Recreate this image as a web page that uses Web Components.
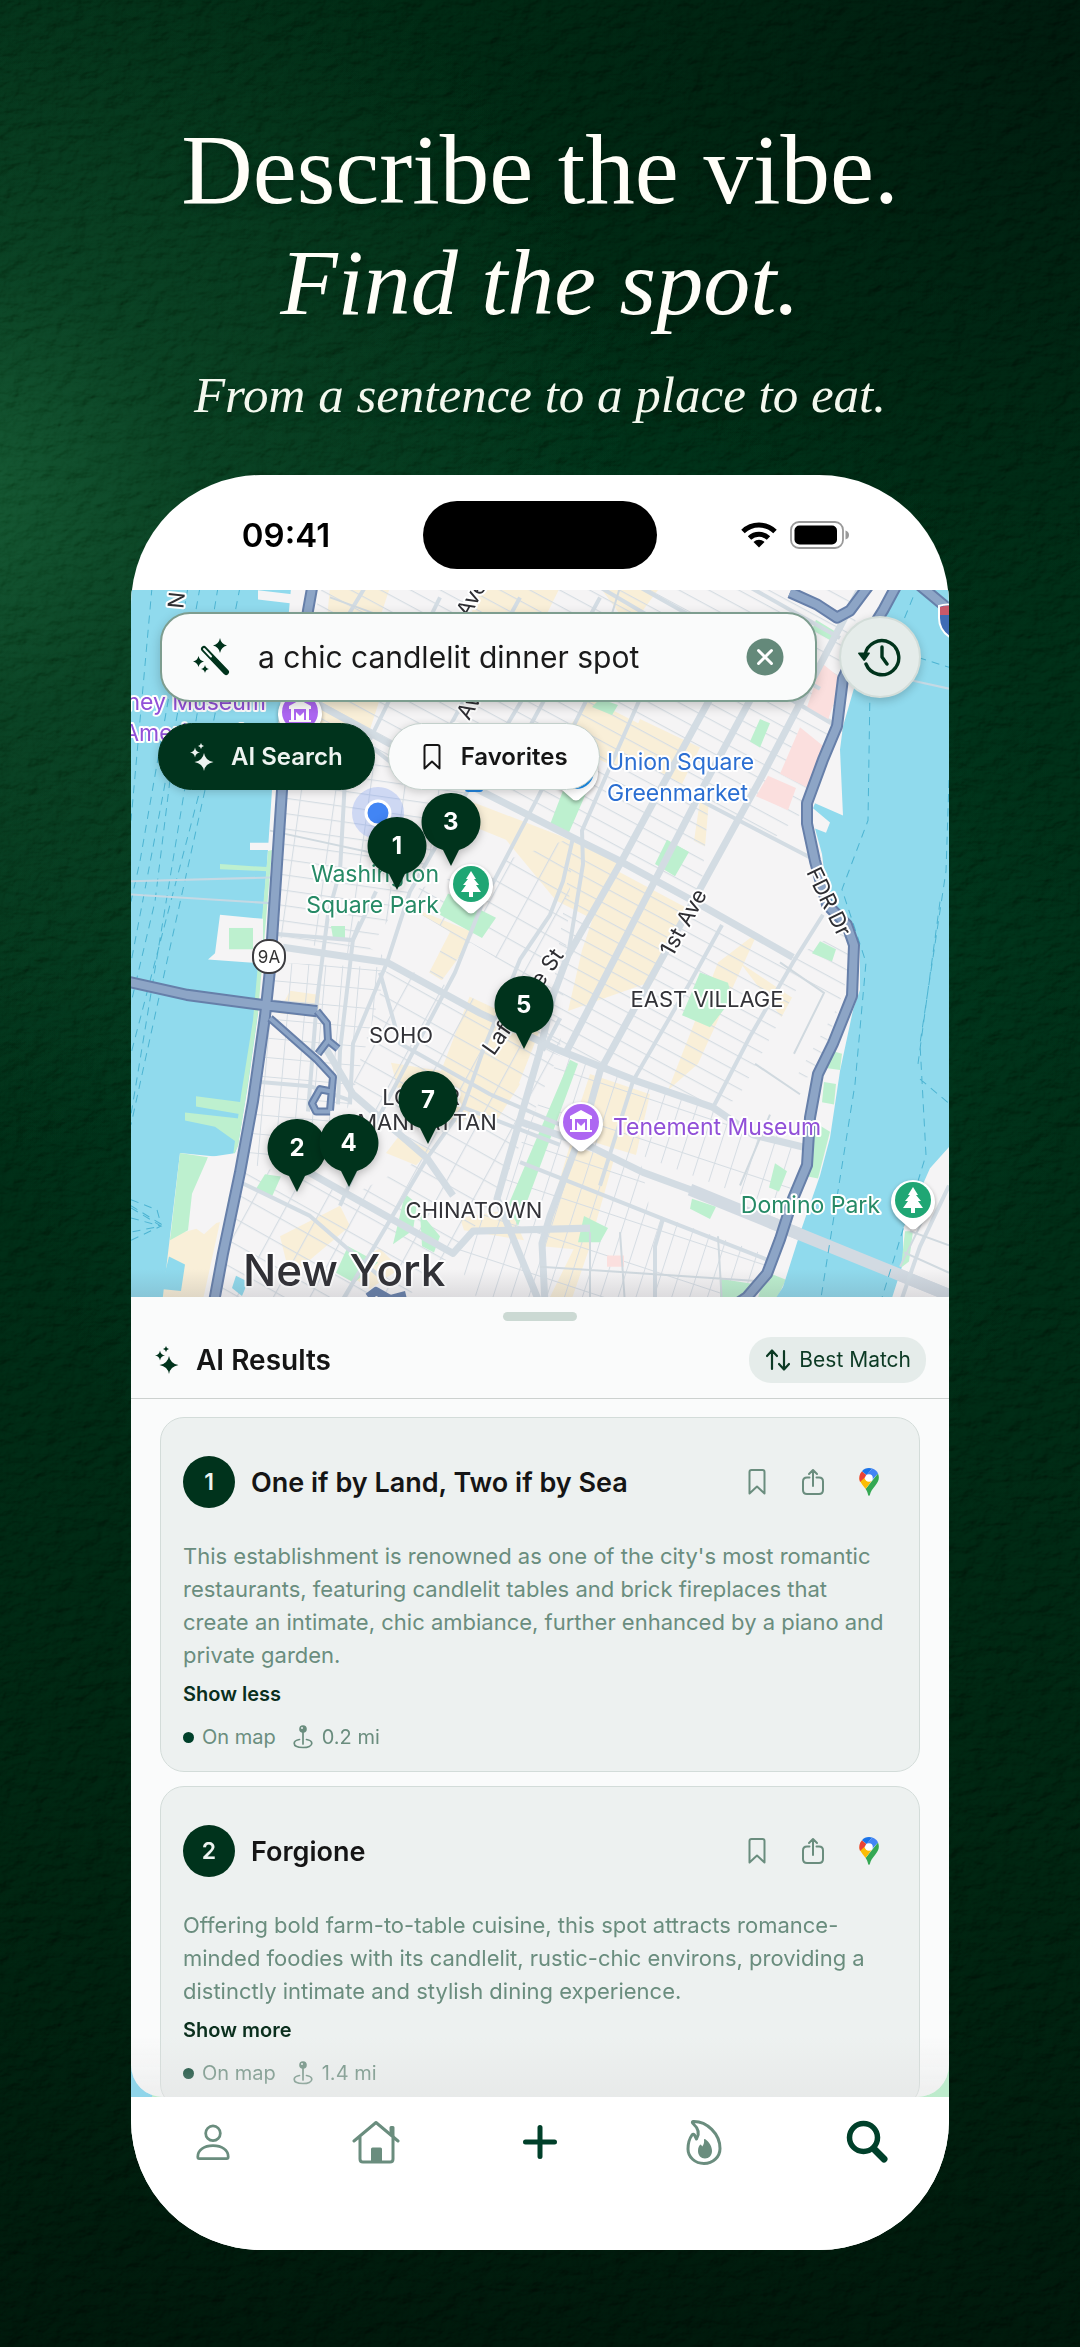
<!DOCTYPE html>
<html lang="en">
<head>
<meta charset="utf-8">
<meta name="viewport" content="width=device-width, initial-scale=1">
<title>Describe the vibe. Find the spot.</title>
<style>
  html, body {
    margin: 0;
    height: 100%;
    background: #00200e;
  }
  body {
    font-family: Inter, "Liberation Sans", sans-serif;
    color: #151515;
  }
</style>
</head>
<body>

<promo-stage>
  <span slot="title">Describe the vibe.</span>
  <em slot="accent">Find the spot.</em>
  <span slot="tagline">From a sentence to a place to eat.</span>

  <phone-frame>
    <status-bar time="09:41"></status-bar>
    <city-map>
      <map-pin style="left: 20.3%; top: 85.1%">2</map-pin>
      <map-pin style="left: 26.6%; top: 84.4%">4</map-pin>
      <map-pin style="left: 36.3%; top: 78.3%">7</map-pin>
      <map-pin style="left: 48%; top: 64.9%">5</map-pin>
      <map-pin style="left: 39.1%; top: 39%">3</map-pin>
      <map-pin style="left: 32.5%; top: 42.5%">1</map-pin>
      <search-panel slot="controls" query="a chic candlelit dinner spot"></search-panel>
    </city-map>
    <result-sheet>
      <result-card rank="1" name="One if by Land, Two if by Sea" toggle="Show less" distance="0.2 mi">This establishment is renowned as one of the city's most romantic restaurants, featuring candlelit tables and brick fireplaces that create an intimate, chic ambiance, further enhanced by a piano and private garden.</result-card>
      <result-card rank="2" name="Forgione" toggle="Show more" distance="1.4 mi">Offering bold farm-to-table cuisine, this spot attracts romance-minded foodies with its candlelit, rustic-chic environs, providing a distinctly intimate and stylish dining experience.</result-card>
    </result-sheet>
    <tab-bar></tab-bar>
  </phone-frame>
</promo-stage>

<script>
// Small base class: clones the markup of the element into an open shadow root
class BaseElement extends HTMLElement {
  constructor() {
    super();
    const template = document.createElement("template");
    template.innerHTML = this.constructor.markup;
    this.attachShadow({ mode: "open" });
    this.shadowRoot.appendChild(template.content.cloneNode(true));
  }
  fill(selector, attribute) {
    this.shadowRoot.querySelector(selector).textContent = this.getAttribute(attribute);
  }
}

const icons = {
  wand: `<svg viewBox="0 0 38 38"><path d="M11 11 33 34" stroke="currentColor" stroke-width="6" stroke-linecap="round"/><path d="m11 11 7 7.5" stroke="#fafbfb" stroke-width="2" stroke-linecap="round"/><path d="M27 0q1 6 7 7.500-6 1.500-7 7.500-1-6-7-7.500 6-1.500 7-7.500zM5.500 18q1 4.500 5.500 5.500-4.500 1-5.500 5.500-1-4.500-5.500-5.500 4.500-1 5.500-5.500zM12 27q.7 3.300 4 4-3.300.7-4 4-.7-3.300-4-4 3.300-.7 4-4z"/></svg>`,
  sparkles: `<svg viewBox="0 0 24 28"><path d="M14 10q1.200 7.500 9.500 9-8.300 1.500-9.500 9-1.200-7.500-9.500-9 8.300-1.500 9.500-9zM5 4.500q.7 4.300 5 5-4.300.7-5 5-.7-4.300-5-5 4.300-.7 5-5zM11 0q.4 2.600 3 3-2.600.4-3 3-.4-2.600-3-3 2.600-.4 3-3z"/></svg>`,
  bookmark: `<svg viewBox="0 0 24 28"><path d="M4.500 25.500V4q0-2 2-2h11q2 0 2 2v21.500L12 18.500z" fill="none" stroke="currentColor" stroke-width="2" stroke-linejoin="round"/></svg>`,
  share: `<svg viewBox="0 0 24 28"><path d="M8.500 9.500H6q-4 0-4 4V22q0 4 4 4h12q4 0 4-4v-8.500q0-4-4-4h-2.500M12 18V2.500M8 6l4-4 4 4" fill="none" stroke="currentColor" stroke-width="2" stroke-linecap="round" stroke-linejoin="round"/></svg>`,
  gmaps: `<svg viewBox="0 0 20 28"><path fill="#34a853" d="M19 5.500c2 5 .3 8.700-3 12.500-3 3.600-4.300 5.500-5 8.500-.3 1.800-1.700 1.800-2 0-.4-2-1.300-4-2.400-5.500z"/><path fill="#fbbc04" d="m2.500 6.500 4.700 6 5.700-.1-6.300 8.600C4.800 18.300 2 15.600.9 12.800.3 10.500.7 8 2.500 6.500z"/><path fill="#ea4335" d="M3 3.200 8 7.500 1 14C-.5 9.800.3 6 3 3.200z"/><path fill="#1a73e8" d="M10 0c-2.900 0-5.400 1.200-7 3.200L7.700 7 13.200.5A11 11 0 0 0 10 0z"/><path fill="#4285f4" d="M13.200.5 6.800 8l5.800 4.500L19 5.500C18 3.200 16 1.300 13.200.5z"/><circle cx="10" cy="10" r="3.800" fill="#fff"/></svg>`,
  sort: `<svg viewBox="0 0 28 24"><path d="M8 21V3M3 8l5-5.500L13 8M20 3v18M15 16l5 5.500 5-5.500" fill="none" stroke="currentColor" stroke-width="2.200" stroke-linecap="round" stroke-linejoin="round"/></svg>`,
  distance: `<svg viewBox="0 0 20 24"><circle cx="10" cy="4" r="3.800"/><circle cx="9" cy="3" r="1" fill="#ecf1f0"/><path d="M10 7v12M6.500 14.500c-3 .5-5.300 1.800-5.300 3.700 0 2.700 3.700 4.300 8.800 4.300s8.800-1.600 8.800-4.300c0-1.900-2.300-3.200-5.300-3.700" fill="none" stroke="currentColor" stroke-width="1.700" stroke-linecap="round"/></svg>`,
  close: `<svg viewBox="0 0 38 38"><circle cx="19" cy="19" r="18.500" fill="#64897a"/><path d="m12.500 12.500 13 13m0-13-13 13" stroke="#fff" stroke-width="3" stroke-linecap="round"/></svg>`,
  history: `<svg viewBox="0 0 44 44"><path d="M8 29a17 17 0 1 0-1-9M24 12v10l5 7" fill="none" stroke="currentColor" stroke-width="3.400" stroke-linecap="round" stroke-linejoin="round"/><path d="M0 18.500q0-1 1-1h10q1.500 0 .7 1.300l-4.500 6.500q-1 1.200-2 0z"/></svg>`,
  person: `<svg viewBox="0 0 48 48"><g fill="none" stroke="currentColor" stroke-width="3"><circle cx="24" cy="14.500" r="8"/><path d="M9 42q-1.600 0-1.600-2C7.400 33 14 28 24 28s16.600 5 16.600 12q0 2-1.600 2z"/></g></svg>`,
  home: `<svg viewBox="0 0 48 48"><path d="M2 23 24 4.500 46 23M8 19v22q0 3 3 3h27q3 0 3-3V19" fill="none" stroke="currentColor" stroke-width="3" stroke-linecap="round" stroke-linejoin="round"/><path d="M37.500 9.500q0-1.500 1.500-1.500h2q1.500 0 1.500 1.500V20l-5-4.500zM19 31q0-1.500 1.500-1.500h8q1.500 0 1.500 1.500v13H19z"/></svg>`,
  plus: `<svg viewBox="0 0 48 48"><path d="M24 9.500v29M9.500 24h29" stroke="currentColor" stroke-width="5" stroke-linecap="round"/></svg>`,
  flame: `<svg viewBox="0 0 48 48"><path d="M13 3.500c14-.5 27 12.500 27 27C40 39 33 45.500 24 45.500S8 39 8 31c0-5 1.500-10.500 4-14 1-1.200 2-1 2.500 0l2 4c3.500-5.500 1.500-11-3.500-15.500-1-1-.8-1.900 0-2z" fill="none" stroke="currentColor" stroke-width="3" stroke-linejoin="round"/><path d="M25 21c4.500 3 7 7.500 7 12 0 4.500-3 7.500-7 7.500s-7-3-7-7.500c0-3 1-5.500 2.500-6.500.7 0 1.200 1.200 1.700 2 1.600-2 2.200-4.500 1.800-6.500 0-1 .4-1.300 1-1z"/></svg>`,
  search: `<svg viewBox="0 0 48 48"><g fill="none" stroke="currentColor" stroke-linecap="round"><circle cx="20.500" cy="19.500" r="14" stroke-width="5.500"/><path d="m32 32 9 9" stroke-width="7"/></g></svg>`,
  wifi: `<svg viewBox="0 0 36 27"><path d="M2 10.500a23 23 0 0 1 32 0M8.500 17a14 14 0 0 1 19 0" fill="none" stroke="currentColor" stroke-width="5"/><path d="M18 26.500 12.500 21a8 8 0 0 1 11 0z"/></svg>`,
  battery: `<svg viewBox="0 0 60 28"><rect x="1" y="1" width="52" height="26" rx="8" fill="none" stroke="#999" stroke-width="1.800"/><rect x="4.500" y="4.500" width="42.500" height="19" rx="5"/><path d="M55.500 9.500q3.500 1 3.500 4.500t-3.500 4.500z" fill="#999"/></svg>`
};

class AppIcon extends HTMLElement {
  connectedCallback() {
    if (this.shadowRoot) return;
    this.attachShadow({ mode: "open" }).innerHTML = `
      <style>
        :host { display: inline-block; flex: none; width: 24px; height: 28px; }
        svg { display: block; width: 100%; height: 100%; fill: currentColor; }
      </style>
      ${icons[this.getAttribute("name")]}`;
  }
}
customElements.define("app-icon", AppIcon);

class PromoStage extends BaseElement {
  static markup = `
    <style>
      :host {
        display: flex;
        flex-direction: column;
        align-items: center;
        box-sizing: border-box;
        height: 100%;
        min-height: 1800px;
        padding: 114px 24px 97px;
        position: relative;
        overflow: hidden;
        background:
          radial-gradient(ellipse 62% 28% at -4% 21%, #10502a 0%, rgba(10, 64, 32, .7) 35%, rgba(0, 40, 18, 0) 100%),
          radial-gradient(ellipse 50% 30% at 50% 42%, #00351a, rgba(0, 40, 18, 0) 100%),
          radial-gradient(ellipse 60% 25% at 100% 0, #00140a, rgba(0, 20, 10, 0) 100%),
          linear-gradient(#00200e, #002712 40%, #001c0c 80%, #001208);
      }
      .grain {
        position: absolute;
        inset: 0;
        width: 100%;
        height: 100%;
        opacity: .2;
        mix-blend-mode: soft-light;
      }
      header {
        position: relative;
        text-align: center;
        color: #fffef8;
        font-family: "Liberation Serif", serif;
        text-shadow: 0 4px 12px rgba(0, 0, 0, .3);
      }
      h1 {
        margin: 0;
        font-size: 99px;
        line-height: 112px;
        font-weight: 400;
      }
      h1 span { display: block; }
      h1 .accent { font-size: 94px; }
      p {
        margin: 27px 0 50px;
        font-size: 51px;
        line-height: 60px;
        font-style: italic;
        color: #f3f8ee;
      }
      main {
        display: flex;
        position: relative;
        flex: 1;
        min-height: 0;
        width: 100%;
        max-width: 818px;
      }
      ::slotted(phone-frame) { flex: 1; }
    </style>
    <svg class="grain" aria-hidden="true">
      <filter id="leather" x="0" y="0" width="100%" height="100%">
        <feTurbulence type="fractalNoise" baseFrequency=".05 .08" numOctaves="4" seed="4"/>
        <feDiffuseLighting lighting-color="#fff" surfaceScale="5"><feDistantLight azimuth="225" elevation="45"/></feDiffuseLighting>
      </filter>
      <rect width="100%" height="100%" filter="url(#leather)"/>
    </svg>
    <header>
      <h1><span><slot name="title"></slot></span><span class="accent"><slot name="accent"></slot></span></h1>
      <p><slot name="tagline"></slot></p>
    </header>
    <main><slot></slot></main>
  `;
}
customElements.define("promo-stage", PromoStage);

class PhoneFrame extends BaseElement {
  static markup = `
    <style>
      :host {
        display: flex;
        flex-direction: column;
        min-height: 0;
        min-width: 0;
        overflow: hidden;
        background: #fff;
        border-radius: 130px;
      }
    </style>
    <slot></slot>
  `;
}
customElements.define("phone-frame", PhoneFrame);

class StatusBar extends BaseElement {
  static markup = `
    <style>
      :host {
        display: grid;
        grid-template-columns: 1fr 234px 1fr;
        align-items: center;
        height: 111px;
        padding-top: 4px;
        color: #000;
      }
      time {
        justify-self: center;
        margin-left: 18px;
        font-size: 33px;
        font-weight: 600;
      }
      .island { height: 68px; border-radius: 34px; background: #000; }
      .signals {
        display: flex;
        align-items: center;
        justify-content: center;
        gap: 13px;
        margin-right: 16px;
      }
      .wifi { width: 36px; height: 27px; }
      .battery { width: 60px; height: 28px; }
    </style>
    <time></time>
    <div class="island"></div>
    <div class="signals">
      <app-icon class="wifi" name="wifi"></app-icon>
      <app-icon class="battery" name="battery"></app-icon>
    </div>
  `;
  connectedCallback() {
    this.fill("time", "time");
  }
}
customElements.define("status-bar", StatusBar);

class CityMap extends BaseElement {
  static markup = `
    <style>
      :host {
        display: block;
        flex: none;
        position: relative;
        aspect-ratio: 818 / 707;
        overflow: hidden;
        background: #f5f4f5;
      }
      svg { display: block; width: 100%; height: 100%; }
      .controls { position: absolute; inset: 0 0 auto; }
      .shade {
        position: absolute;
        inset: auto 0 0;
        height: 28px;
        background: linear-gradient(rgba(90, 90, 100, 0), rgba(90, 90, 100, .16));
      }
      .water { fill: #90daed; }
      .land { fill: #f5f4f5; }
      .park { fill: #bdf0cf; }
      .shops { fill: #f9efd8; }
      .clinic { fill: #fbdfde; }
      .minor path { fill: none; stroke: #d0d9df; stroke-width: 2; }
      .major path { fill: none; stroke: #d3dce3; stroke-width: 7; stroke-linejoin: round; }
      .avenue path { fill: none; stroke: #d3dce3; stroke-width: 4; stroke-linejoin: round; }
      .highway path { fill: none; stroke-linejoin: round; stroke-linecap: butt; }
      .casing path { stroke: #667fa9; stroke-width: 12; }
      .fill path { stroke: #8da5c6; stroke-width: 8; }
      .ferry path { fill: none; stroke: #4db4d2; stroke-width: 1; stroke-dasharray: 8 6; }
      text {
        font-family: Inter, "Liberation Sans", sans-serif;
        paint-order: stroke;
        stroke: #fff;
        stroke-width: 4px;
        stroke-linejoin: round;
        font-size: 23px;
      }
      .area { font-size: 22px; fill: #333338; text-anchor: middle; }
      .street { font-size: 22px; fill: #2e2e33; text-anchor: middle; }
      .green { fill: #268a66; }
      .blue { fill: #2c6fd2; }
      .purple { fill: #9150d8; }
      .city { font-size: 44px; font-weight: 500; fill: #303035; }
      .end { text-anchor: end; }
    </style>
    <svg viewBox="131 590 818 707" preserveAspectRatio="xMidYMid slice" role="img" aria-label="Map of Lower Manhattan">
      <defs>
        <pattern id="rows" width="46" height="14" patternUnits="userSpaceOnUse" patternTransform="translate(573 837) rotate(28)"><path d="M0 0H46" stroke="#d6dde3" stroke-width="2.400"/></pattern>
        <pattern id="blocks" width="32" height="22" patternUnits="userSpaceOnUse" patternTransform="rotate(29)"><path d="M0 0H32M0 0V22" fill="none" stroke="#d6dde3" stroke-width="2.400"/></pattern>
        <pattern id="village" width="34" height="15" patternUnits="userSpaceOnUse" patternTransform="rotate(8)"><path d="M0 0H34M0 0V15" fill="none" stroke="#d6dde3" stroke-width="2.200"/></pattern>
        <pattern id="tribeca" width="17" height="19" patternUnits="userSpaceOnUse" patternTransform="rotate(5)"><path d="M0 0H17M0 0V19" fill="none" stroke="#d6dde3" stroke-width="2"/></pattern>
        <pattern id="east" width="17" height="40" patternUnits="userSpaceOnUse" patternTransform="rotate(18)"><path d="M0 0V40M0 0H17" fill="none" stroke="#d6dde3" stroke-width="2"/></pattern>
        <symbol id="marker" viewBox="-24 -24 48 58" overflow="visible">
          <path d="M0 29.500q-3 0-6-3.500l-8-7A22 22 0 1 1 14 19l-8 7q-3 3.500-6 3.500z" fill="#fff"/>
        </symbol>
        <symbol id="tree" viewBox="-20 -20 40 40"><path fill="#fff" d="M0-13 5-5H3l5 6H5l5 7H2v5h-4V8h-8l5-7h-3l5-6h-2z"/></symbol>
        <symbol id="museum" viewBox="-20 -20 40 40"><path fill="#fff" fill-rule="evenodd" d="M0-12-11-6v3h2v11h-2v2h22V8H9V-3h2v-3zM-6-3H6V8h-2V0L0 4-4 0v8h-2z"/></symbol>
      </defs>

      <g transform="translate(0 -11) scale(1 1.014)">
      <!-- commercial areas -->
      <g class="shops">
        <path d="m330 590 60 0-20 60-44-18zM480 590h80l-30 60-70 0zM600 590h60l-30 40zM590 700l60 30-30 40-60-30zM640 720l60 28-18 36-56-30z"/>
        <path d="m300 690 80 10-10 30-90 0zM455 795l105 40 60 28-24 56-40-20-50-60-50-20z"/>
        <path d="m410 905 60 24-16 56-56-34zM610 866l80 42-36 70-86 30 14-60zM473 985l70 34-24 60-60 40-60-30-8-30 50 8zM500 1060l20 20-26 40-40-16z"/>
        <path d="m718 960 40-30-60 130-30 26zM590 1070l60 20-14 60-66-20zM570 1140l44 14-26 90-46-4 10-40zM170 1230l50-14-18 81h-41zM280 1230l60-30 10 20-60 50zM460 1212l50-8 14 30-60-10zM340 1262l40-20 20 20-30 20zM550 1290l30-60 10 10-20 57zM400 1130l30 16-14 14-30-12z"/>
        <path d="m290 988 30 4-2 22-40-4zM740 960l60 40-14 20zM700 800l50 30-16 30-40-20z"/>
      </g>
      <path fill="url(#rows)" d="M322 590H860L842 720 805 810 700 903 793 955 870 900 818 1070 713 1103 545 1047 573 837 470 787 282 720z"/>
      <path fill="url(#village)" d="M284 730 470 787 410 890 387 960 277 935z"/>
      <path fill="url(#blocks)" d="M410 890 573 837 560 1047 497 1193 427 1153 350 1090z"/>
      <path fill="url(#tribeca)" d="M272 960 387 965 350 1100 302 1163 246 1160z"/>
      <path fill="url(#blocks)" d="M246 1165 302 1163 350 1190 430 1150 497 1193 453 1247 400 1297 218 1297z"/>
      <path fill="url(#east)" d="M560 1050 713 1103 803 1142 770 1250 747 1297H480L453 1247 497 1193z"/>
      <path class="land" d="M709 800 805 860 840 930 793 955 700 903zM400 900l50 30-24 46-56-30zM470 940l50 30-24 36-56-26zM640 1150l130 50 0 50-120-44zM800 980l40 20-60 100-40-10z"/>
      <path class="clinic" d="m822 665 20 16-14 40-22-10zM800 728l30 24-14 40-36-18zM768 776l28 12-8 22-32-14zM607 1249h17v11h-17z"/>
      <g class="park">
        <path d="m816 622 20 12-6 8-18-10zM760 720l10 4-10 24-10-6zM590 760l0 24-22 50-18-10 14-36zM667 839l22 12-14 24-20-12zM700 970l28 10 4 16-22 28-28-12z"/>
        <path d="m820 939 16 8-4 12-20-8zM570 1056l8 4-60 160-10-20zM448 892l48 24-14 20-44-24zM331 924h14v12h-12zM265 1169l16 2-10 22-16-8zM217 1192l16-4-6 20-14-2zM405 1188l12 10-4 26-20 14zM420 1206l20 24-6 16-12-6zM348 1240l30 16-24 20-18-10z"/>
        <path d="m828 1046 14 4-2 16-14-2zM824 1078l12 2-2 20-12-2zM810 1115l20 12-12 46-10-2zM775 1158l12 8-8 20-10-4zM692 1193l24 8-6 12-20-10zM584 1210l24 12-8 14-22 0zM720 1272l40 6-10 19h-30zM766 1265l20 8-10 20-20 4z"/>
        <path d="m600 700 18 6-6 10-20-8z"/>
      </g>

      <g class="major">
        <path d="M283 945 387 960 480 1010 560 1047 637 1077 713 1103 753 1130 803 1142"/>
        <path d="M290 690 400 750 473 787 573 837 620 860 700 903 793 955"/>
        <path d="M866 580 760 780 600 1067 587 1113 550 1210 542 1237 545 1297"/>
        <path d="M707 780 567 1047M770 665 707 780M660 790 620 863 568 953 553 993 540 1047 497 1193 540 1297M735 655 660 790"/>
        <path d="M520 1117 587 1140 643 1167 770 1213"/>
        <path d="M323 1040 353 1090 427 1153 453 1190M302 1163 350 1190 453 1247 473 1225 590 1222"/>
      </g>
      <path d="M690 1184 949 1288" stroke="#d2dae2" stroke-width="12"/>
      <g class="avenue">
        <path d="M550 655 470 787 410 890 387 960 353 1040 350 1100M610 655 538 797 483 900 455 970 380 1110 340 1200"/>
        <path d="M660 655 582 830 583 863 568 953M573 837 563 880 550 913 520 957 483 1047 463 1103 427 1153 340 1297"/>
        <path d="M722 923 690 980 633 1077 600 1180M823 913 793 960 750 1033 713 1103M345 780 340 870 328 913 317 997 308 1107M360 920 353 937 340 1047 338 1100"/>
        <path d="M520 1157 587 1183 663 1213 767 1253M243 1178 310 1210 380 1270M277 932 353 938 376 890M260 1078 310 1082 350 1096M350 720 362 740 400 770M370 740 440 600M440 745 520 600M520 745 600 600M365 590 310 680M700 800 817 860M663 1213 655 1240 655 1297M560 1015 543 1047"/>
        <path d="M600 590 850 735M640 590 820 690M750 590 840 640M463 1103 560 1140M380 970 400 1040 490 1090 560 1120"/>
      </g>
      <g class="minor">
        <path d="M620 590 600 655M330 600 470 650M270 830 410 860M540 1260 770 1275M590 1226 590 1297M620 1226 625 1297M718 1230 722 1297M755 1060 800 1090M740 1180l30-70M780 960l44 30-30 60"/>
      </g>

      <!-- rivers -->
      <path class="water" d="M131 580H292L289 613 272 790 267 863 262 923 258 1010 248 1080 238 1140 233 1153 180 1148 170 1230 162 1297H131z"/>
      <path class="park" d="M268 850l4-1-14 160-10 70-10 62-5 10 8-60 12-74zM220 863l47 3v4l-47-2zM196 1092l46 6v12l-46-8zM185 1108l54 6-4 22-20-14-30-6zM180 1148l28 4-16 36-4 36-18 10z"/>
      <path class="land" d="M258 593l34 4v9l-34-4zM250 842h19v7h-19zM220 913l43 4v44l-55-4 7-6zM208 1152l28-4-10 60-22 20-14-10z"/>
      <path class="park" d="M229 926h24v21h-24z"/>
      <path class="water" d="M169 1250l16 8-4 26-20-2zM236 1269l12 6-6 14-10-8z"/>
      <path class="water" d="M900 580 888 613 860 670 853 693 843 727 840 750 843 815 815 803 813 808 830 822 826 832 815 828 822 853 827 893 848 923 860 943 860 987 853 1007 840 1067 830 1133 820 1170 800 1227 783 1280 772 1297H890L903 1257 903 1223 930 1163 949 1142V580z"/>
      <path class="park" d="M905 1225l8 0-4 30-8 6z"/>
      <path d="M770 1216 949 1288" stroke="#d2dae2" stroke-width="12"/>
      <g class="avenue"><path d="M949 1180 920 1240 900 1297"/></g>
      <g class="minor"><path d="M910 1225l39 14M904 1246l45 20M930 1200l-30 60"/></g>
      <g class="ferry">
        <path d="M152 590 131 820M188 590 140 860 131 900M200 590 162 800 131 960M218 590 131 1110M240 590 200 790 131 1050M170 780 155 900 131 1000M205 790 160 990 131 1120"/>
        <path d="M131 1194l26 10 4 14-30-18M131 1202l30 18-30 6M131 1212l30 8-30 14"/>
        <path d="M913 600 888 660M870 690 868 820 845 880 842 888 866 960 855 1080 820 1297M949 780 946 870 920 1040 926 1150 880 1297M905 655l44 14M920 1075l29 24M940 900 918 1060"/>
      </g>
      <path d="M131 880 278 876M131 893 278 902M912 682l37 8" stroke="#c5d9e4" stroke-width="2"/>

      <g class="highway casing">
        <path d="M314 580 308 613 282 790 277 863 270 967 265 1013 253 1097 240 1167 223 1247 213 1300M128 979 187 992 263 1002 317 1008M901 580 883 613 850 665 843 680 837 727 823 760 807 803 807 823 815 860 827 903 847 923 854 943 852 993 833 1040 818 1070 810 1113 807 1160 793 1193 780 1233 767 1267 747 1290 735 1298M875 580 850 613 837 620 817 607 790 595M910 580 949 612"/>
      </g>
      <g class="highway fill">
        <path d="M314 580 308 613 282 790 277 863 270 967 265 1013 253 1097 240 1167 223 1247 213 1300M128 979 187 992 263 1002 317 1008M901 580 883 613 850 665 843 680 837 727 823 760 807 803 807 823 815 860 827 903 847 923 854 943 852 993 833 1040 818 1070 810 1113 807 1160 793 1193 780 1233 767 1267 747 1290 735 1298M875 580 850 613 837 620 817 607 790 595M910 580 949 612"/>
      </g>
      <g fill="none" stroke-linejoin="round">
        <path d="M317 1008 327 1020 328 1037 318 1050M328 1037l10 8M270 1015 317 1056 333 1073 330 1106M330 1087l-10-2-8 14 4 8 14 0M368 1290l8-6 14 8 16-4" stroke="#667fa9" stroke-width="8"/>
        <path d="M317 1008 327 1020 328 1037 318 1050M328 1037l10 8M270 1015 317 1056 333 1073 330 1106M330 1087l-10-2-8 14 4 8 14 0" stroke="#8da5c6" stroke-width="4"/>
      </g>
      </g>

      <!-- street names -->
      <text class="street" transform="translate(478 602) rotate(-61)">Ave</text>
      <text class="street" transform="translate(472 716) rotate(-61)">th Ave</text>
      <text class="street" transform="translate(690 926) rotate(-61)">1st Ave</text>
      <text class="street" transform="translate(529 1006) rotate(-55)">Lafayette St</text>
      <text class="street" transform="translate(822 905) rotate(64)">FDR Dr</text>
      <text class="street" transform="translate(184 601) rotate(-84)">N</text>
      <rect x="253" y="940" width="32" height="33" rx="15" fill="#fff" stroke="#3c3c40" stroke-width="2"/>
      <text x="269" y="963" style="font-size: 17px; text-anchor: middle" fill="#333">9A</text>

      <!-- neighbourhoods -->
      <text class="area" x="401" y="1043">SOHO</text>
      <text class="area" x="421" y="1105">LOWER</text>
      <text class="area" x="427" y="1130">MANHATTAN</text>
      <text class="area" x="474" y="1218">CHINATOWN</text>
      <text class="area" x="707" y="1007">EAST VILLAGE</text>
      <text class="city" x="243" y="1286">New York</text>

      <!-- places -->
      <text class="purple end" x="266" y="710">ney Museum</text>
      <text class="purple end" x="266" y="741">American Art</text>
      <text class="green end" x="439" y="882">Washington</text>
      <text class="green end" x="439" y="913">Square Park</text>
      <text class="blue" x="607" y="770">Union Square</text>
      <text class="blue" x="607" y="801">Greenmarket</text>
      <text class="purple" x="613" y="1135">Tenement Museum</text>
      <text class="green end" x="880" y="1213">Domino Park</text>

      <g style="filter: drop-shadow(0 2px 2px rgba(0,0,0,.35))">
        <use href="#marker" x="276" y="688" width="48" height="58"/>
        <use href="#marker" x="552" y="747" width="48" height="58"/>
        <use href="#marker" x="447" y="860" width="48" height="58"/>
        <use href="#marker" x="557" y="1098" width="48" height="58"/>
        <use href="#marker" x="889" y="1176" width="48" height="58"/>
      </g>
      <circle cx="300" cy="712" r="18" fill="#ad66f2"/>
      <circle cx="576" cy="771" r="18" fill="#1a8fee"/>
      <circle cx="471" cy="884" r="18" fill="#1fa674"/>
      <circle cx="581" cy="1122" r="18" fill="#ad66f2"/>
      <circle cx="913" cy="1200" r="18" fill="#1fa674"/>
      <use href="#museum" x="280" y="692" width="40" height="40"/>
      <use href="#tree" x="451" y="864" width="40" height="40"/>
      <use href="#museum" x="561" y="1102" width="40" height="40"/>
      <use href="#tree" x="893" y="1180" width="40" height="40"/>
      <rect x="465" y="776" width="18" height="16" rx="3" fill="#2385e0"/>

      <!-- interstate shield -->
      <path d="M939 606q8-3 20 0v36q-20-8-20-24z" fill="#3f6bb5" stroke="#fff" stroke-width="2"/>
      <path d="M940 607q8-3 20 0v8h-20z" fill="#c9596a"/>

      <!-- current location -->
      <circle cx="378" cy="813" r="26" fill="rgba(90, 130, 240, .25)"/>
      <circle cx="378" cy="813" r="12" fill="#4285f4" stroke="#fff" stroke-width="3"/>
    </svg>
    <div class="shade"></div>
    <slot></slot>
    <div class="controls"><slot name="controls"></slot></div>
  `;
}
customElements.define("city-map", CityMap);

class MapPin extends BaseElement {
  // left/top of the host give the point the pin's tip stands on
  static markup = `
    <style>
      :host {
        display: block;
        position: absolute;
        width: 60px;
        height: 74px;
        transform: translate(-50%, -100%);
        color: #fff;
      }
      button {
        display: grid;
        width: 100%;
        height: 100%;
        padding: 0;
        border: 0;
        background: none;
        color: inherit;
        font: 700 24px/60px Inter, "Liberation Sans", sans-serif;
      }
      svg, span { grid-area: 1 / 1; }
      span { z-index: 1; }
      svg {
        width: 60px;
        height: 74px;
        filter: drop-shadow(0 3px 4px rgba(0, 0, 0, .25));
      }
    </style>
    <button type="button">
      <svg viewBox="0 0 60 74" aria-hidden="true"><path fill="#00331c" d="M30 1a29 29 0 0 1 8 57l-8 16-8-16a29 29 0 0 1 8-57z"/></svg>
      <span><slot></slot></span>
    </button>
  `;
}
customElements.define("map-pin", MapPin);

class SearchPanel extends BaseElement {
  static markup = `
    <style>
      :host { display: block; padding: 22px 28px 0 27px; }
      * { box-sizing: border-box; }
      form, .chips { display: flex; align-items: center; }
      form { gap: 22px; }
      label {
        display: flex;
        align-items: center;
        flex: 1;
        min-width: 0;
        height: 90px;
        margin-left: 2px;
        padding: 0 31px;
        border: 2px solid #7d9d8f;
        border-radius: 30px;
        background: #fafbfb;
        box-shadow: 0 4px 12px rgba(0, 0, 0, .2);
        color: #00331c;
      }
      label app-icon { width: 38px; height: 38px; }
      input {
        flex: 1;
        min-width: 0;
        margin: 0 12px 0 27px;
        padding: 0;
        border: 0;
        outline: 0;
        background: none;
        color: #1a1a1a;
        font: 400 30px/40px Inter, "Liberation Sans", sans-serif;
      }
      button { border: 0; padding: 0; font-family: inherit; }
      .clear { background: none; }
      .clear app-icon { display: block; }
      .history {
        display: grid;
        place-items: center;
        width: 82px;
        height: 82px;
        border: 2px solid #d3ddd9;
        border-radius: 50%;
        background: #e5ecea;
        box-shadow: 0 3px 10px rgba(0, 0, 0, .2);
        color: #00331c;
      }
      .history app-icon { width: 44px; height: 44px; }
      .chips { gap: 13px; margin-top: 21px; }
      .chip {
        display: flex;
        align-items: center;
        gap: 17px;
        height: 67px;
        padding: 0 31px;
        border: 1px solid #c3d0cb;
        border-radius: 34px;
        background: #fafbfb;
        color: #151515;
        font-size: 24px;
        font-weight: 600;
        box-shadow: 0 2px 8px rgba(0, 0, 0, .18);
      }
      .chip.active { border-color: #00331c; background: #00331c; color: #edf3f0; }
    </style>
    <form onsubmit="return false">
      <label>
        <app-icon name="wand"></app-icon>
        <input type="text" aria-label="Describe a place">
        <button class="clear" type="button" aria-label="Clear"><app-icon name="close"></app-icon></button>
      </label>
      <button class="history" type="button" aria-label="History"><app-icon name="history"></app-icon></button>
    </form>
    <div class="chips">
      <button class="chip active" type="button"><app-icon name="sparkles"></app-icon>AI Search</button>
      <button class="chip" type="button"><app-icon name="bookmark"></app-icon>Favorites</button>
    </div>
  `;
  connectedCallback() {
    this.shadowRoot.querySelector("input").value = this.getAttribute("query");
    this.shadowRoot.querySelector(".clear").addEventListener("click", () => {
      this.shadowRoot.querySelector("input").value = "";
    });
  }
}
customElements.define("search-panel", SearchPanel);

class ResultSheet extends BaseElement {
  static markup = `
    <style>
      :host {
        display: flex;
        flex: 1;
        min-height: 0;
        background: linear-gradient(90deg, #90d5ea 21px, #bdebcc 21px);
      }
      section {
        display: flex;
        flex-direction: column;
        flex: 1;
        min-width: 0;
        position: relative;
        overflow: hidden;
        border-radius: 0 0 32px 32px;
        background: #fafbfb;
      }
      .handle {
        flex: none;
        width: 74px;
        height: 9px;
        margin: 15px auto 0;
        border-radius: 5px;
        background: #cbd9d3;
      }
      header {
        display: flex;
        align-items: center;
        flex: none;
        height: 46px;
        padding: 16px 23px 15px 24px;
        border-bottom: 1px solid #ccd1cf;
        color: #00331c;
      }
      h2 { margin: 0 auto 0 17px; font-size: 28px; font-weight: 600; color: #151515; }
      button {
        display: flex;
        align-items: center;
        gap: 7px;
        height: 46px;
        padding: 0 15px;
        border: 0;
        border-radius: 22px;
        background: #e5ecea;
        color: #0c3a24;
        font: 400 21px/24px Inter, "Liberation Sans", sans-serif;
      }
      button app-icon { width: 28px; height: 24px; }
      .list {
        display: flex;
        flex-direction: column;
        gap: 14px;
        flex: 1;
        min-height: 0;
        overflow: hidden;
        padding: 18px 29px 0;
      }
      .fade {
        position: absolute;
        inset: auto 0 0;
        height: 60px;
        background: linear-gradient(rgba(235, 235, 235, 0), rgba(225, 225, 225, .45));
        pointer-events: none;
      }
    </style>
    <section>
      <div class="handle"></div>
      <header>
        <app-icon name="sparkles"></app-icon>
        <h2>AI Results</h2>
        <button type="button"><app-icon name="sort"></app-icon>Best Match</button>
      </header>
      <div class="list"><slot></slot></div>
      <div class="fade"></div>
    </section>
  `;
}
customElements.define("result-sheet", ResultSheet);

class ResultCard extends BaseElement {
  static markup = `
    <style>
      :host {
        display: block;
        flex: none;
        padding: 21px 22px;
        border: 1px solid #d3dcd9;
        border-radius: 24px;
        background: #edf1f0;
        color: #6a8d7e;
        font-size: 20px;
      }
      header { display: flex; align-items: center; height: 86px; }
      .rank {
        display: grid;
        place-items: center;
        width: 52px;
        height: 52px;
        border-radius: 50%;
        background: #00331c;
        color: #edf3f0;
        font-size: 23px;
        font-weight: 600;
      }
      h3 {
        flex: 1;
        margin: 0 0 0 16px;
        font-size: 27px;
        font-weight: 600;
        color: #151515;
      }
      button { padding: 0; border: 0; background: none; font: inherit; color: inherit; }
      .actions { display: flex; gap: 28px; margin-right: 14px; }
      .actions button { width: 28px; height: 28px; }
      .actions app-icon { display: block; margin: 0 auto; }
      p { margin: 15px 0 0; font-size: 22px; line-height: 33px; }
      .toggle {
        display: block;
        margin: 9px 0 17px;
        font-size: 20px;
        line-height: 26px;
        font-weight: 600;
        color: #0a2f1d;
      }
      footer { display: flex; align-items: center; line-height: 26px; }
      footer::before {
        content: "";
        width: 11px;
        height: 11px;
        margin-right: 8px;
        border-radius: 50%;
        background: #00402a;
      }
      footer app-icon { width: 20px; height: 24px; margin: 0 9px 0 17px; }
    </style>
    <header>
      <span class="rank"></span>
      <h3></h3>
      <div class="actions">
        <button type="button" aria-label="Save"><app-icon name="bookmark"></app-icon></button>
        <button type="button" aria-label="Share"><app-icon name="share"></app-icon></button>
        <button type="button" aria-label="Open in maps"><app-icon name="gmaps"></app-icon></button>
      </div>
    </header>
    <p><slot></slot></p>
    <button class="toggle" type="button"></button>
    <footer><span>On map</span><app-icon name="distance"></app-icon><span class="distance"></span></footer>
  `;
  connectedCallback() {
    this.fill(".rank", "rank");
    this.fill("h3", "name");
    this.fill(".toggle", "toggle");
    this.fill(".distance", "distance");
  }
}
customElements.define("result-card", ResultCard);

class TabBar extends BaseElement {
  static markup = `
    <style>
      :host { display: block; flex: none; background: #fff; }
      nav { display: grid; grid-template-columns: repeat(5, 1fr); padding: 21px 0 84px; }
      a { display: flex; justify-content: center; color: #6a8d7e; }
      a.strong { color: #00402a; }
      app-icon { width: 48px; height: 48px; }
      .small { width: 44px; height: 44px; margin: 2px; }
    </style>
    <nav>
      <a href="#profile" aria-label="Profile"><app-icon class="small" name="person"></app-icon></a>
      <a href="#home" aria-label="Home"><app-icon name="home"></app-icon></a>
      <a href="#add" class="strong" aria-label="Add"><app-icon name="plus"></app-icon></a>
      <a href="#trending" aria-label="Trending"><app-icon name="flame"></app-icon></a>
      <a href="#search" class="strong" aria-label="Search"><app-icon name="search"></app-icon></a>
    </nav>
  `;
}
customElements.define("tab-bar", TabBar);
</script>
</body>
</html>
